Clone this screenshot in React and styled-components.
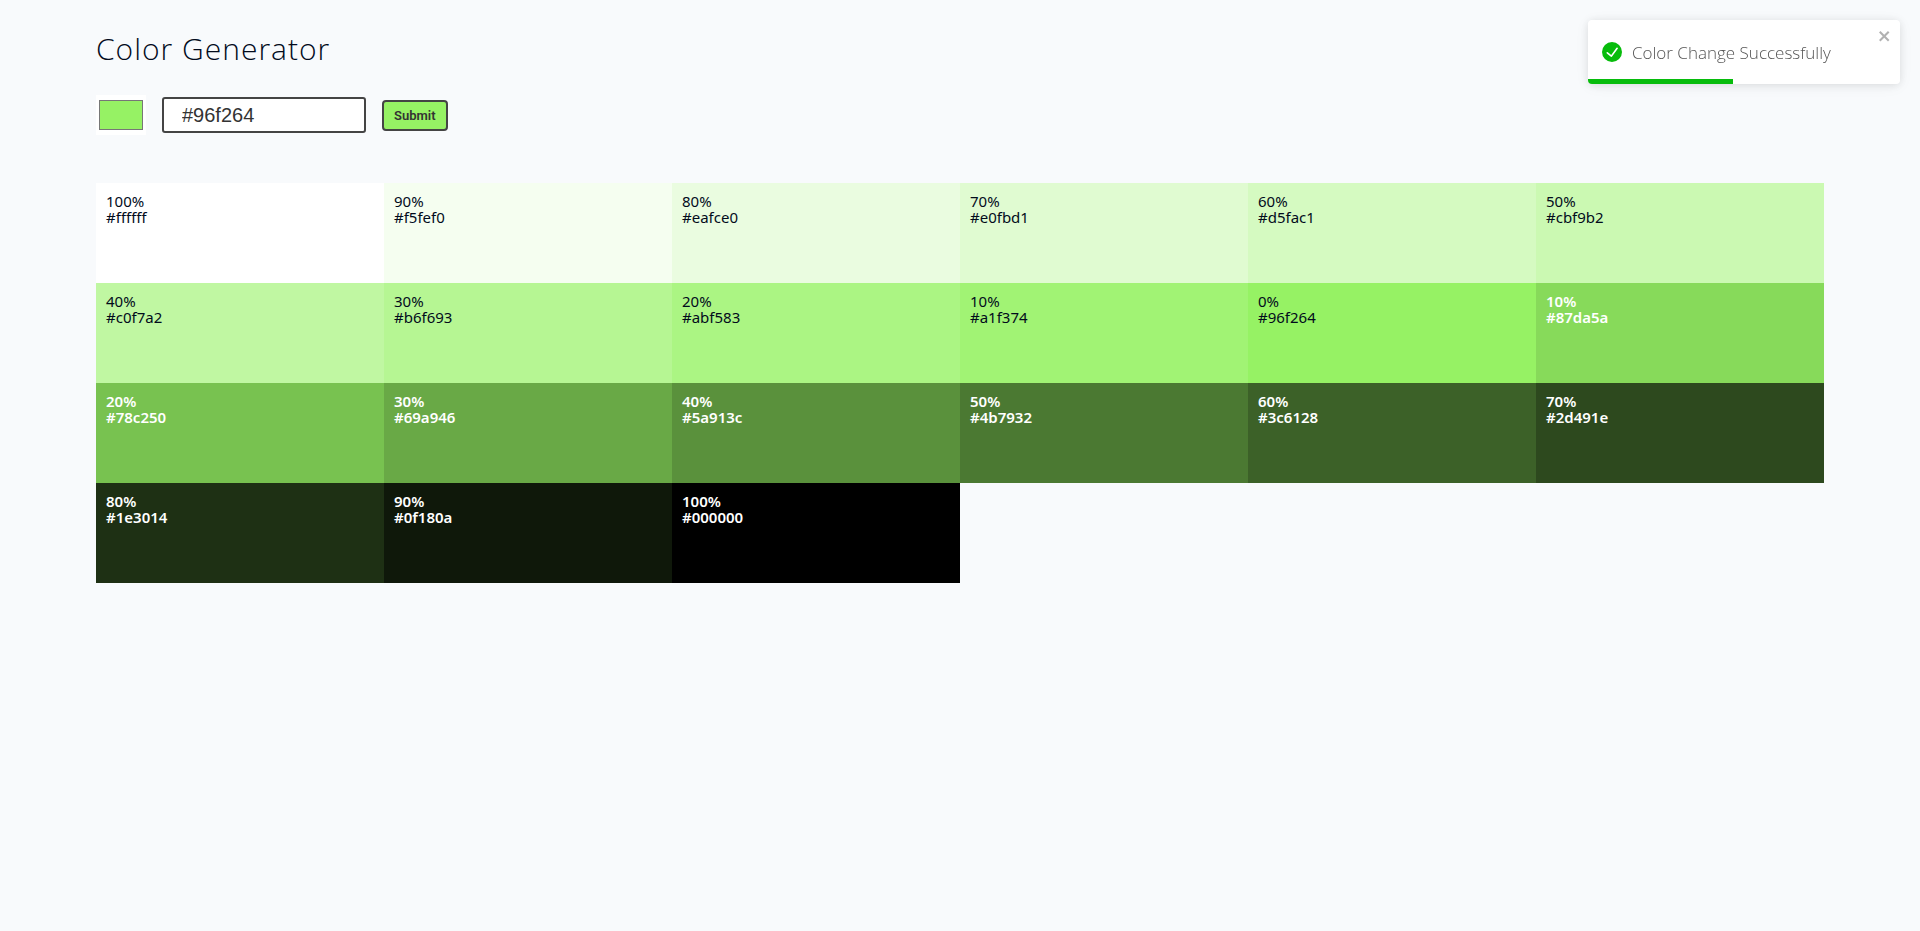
import React, { useState } from 'react';
import styled, { createGlobalStyle } from 'styled-components';

const GlobalStyle = createGlobalStyle`
  *, *::before, *::after { box-sizing: border-box; }
  body {
    margin: 0;
    background: #f8fafc;
    color: #020b1c;
    font-family: "Noto Sans", "Open Sans", sans-serif;
  }
`;

const Page = styled.main`
  width: 90vw;
  margin: 0 auto;
  padding: 25px 0 48px;
`;

const Title = styled.h1`
  margin: 0;
  font-family: "Open Sans", sans-serif;
  font-size: 30px;
  font-weight: 300;
  line-height: 48px;
  letter-spacing: 1px;
`;

const ColorForm = styled.form`
  display: flex;
  align-items: center;
  gap: 16px;
  margin: 22px 0 48px;
`;

const ColorPicker = styled.input`
  width: 50px;
  height: 40px;
  padding: 1px;
  border: 0;
  background: #fff;
`;

const HexInput = styled.input`
  width: 204px;
  height: 36px;
  padding: 0 18px;
  border: 2px solid #444;
  border-radius: 3px;
  background: #fff;
  color: #333;
  font-family: "Liberation Sans", Arial, sans-serif;
  font-size: 20px;
`;

const SubmitButton = styled.button`
  height: 31px;
  padding: 0 10px;
  border: 2px solid #444;
  border-radius: 4px;
  background: ${({ $color }) => $color};
  color: #333;
  font-family: Roboto, sans-serif;
  font-size: 13px;
  font-weight: 600;
`;

const Palette = styled.section`
  display: grid;
  grid-template-columns: repeat(6, 1fr);
`;

const Swatch = styled.article`
  min-height: 100px;
  padding: 10px;
  background: ${({ $color }) => $color};
  color: ${({ $dark }) => ($dark ? '#fff' : 'inherit')};
  font-size: 15px;
  font-weight: ${({ $dark }) => ($dark ? 600 : 400)};
  line-height: 16px;
`;

const SwatchLine = styled.p`
  margin: 0;
`;

const Toast = styled.div`
  position: fixed;
  top: 20px;
  right: 20px;
  display: flex;
  align-items: center;
  gap: 10px;
  width: 312px;
  height: 64px;
  padding: 0 14px;
  border-radius: 4px;
  overflow: hidden;
  background: #fff;
  color: #555;
  font-family: "Open Sans", sans-serif;
  font-size: 17px;
  font-weight: 300;
  box-shadow: 0 1px 10px rgba(0, 0, 0, 0.1), 0 2px 15px rgba(0, 0, 0, 0.05);
`;

const CloseButton = styled.button`
  position: absolute;
  top: 8px;
  right: 8px;
  display: flex;
  padding: 0;
  border: 0;
  background: transparent;
  color: #000;
  opacity: 0.3;
`;

const Progress = styled.div`
  position: absolute;
  left: 0;
  bottom: 0;
  height: 5px;
  background: #07bc0c;
`;

const SWATCHES = [
  [100, '#ffffff'], [90, '#f5fef0'], [80, '#eafce0'], [70, '#e0fbd1'], [60, '#d5fac1'], [50, '#cbf9b2'],
  [40, '#c0f7a2'], [30, '#b6f693'], [20, '#abf583'], [10, '#a1f374'], [0, '#96f264'], [10, '#87da5a'],
  [20, '#78c250'], [30, '#69a946'], [40, '#5a913c'], [50, '#4b7932'], [60, '#3c6128'], [70, '#2d491e'],
  [80, '#1e3014'], [90, '#0f180a'], [100, '#000000'],
];
const BASE_INDEX = 10;

export default function App() {
  const [color, setColor] = useState('#96f264');
  const [toastOpen, setToastOpen] = useState(true);
  const remaining = 46.5;

  const onChange = (event) => setColor(event.target.value);
  const onSubmit = (event) => {
    event.preventDefault();
    setToastOpen(true);
  };

  return (
    <>
      <GlobalStyle />
      <Page>
        <Title>Color Generator</Title>
        <ColorForm onSubmit={onSubmit}>
          <ColorPicker type="color" aria-label="Pick a color" value={color} onChange={onChange} />
          <HexInput type="text" aria-label="Hex color" value={color} onChange={onChange} />
          <SubmitButton type="submit" $color={color}>Submit</SubmitButton>
        </ColorForm>
        <Palette>
          {SWATCHES.map(([percent, hex], index) => (
            <Swatch key={hex} $color={hex} $dark={index > BASE_INDEX}>
              <SwatchLine>{percent}%</SwatchLine>
              <SwatchLine>{hex}</SwatchLine>
            </Swatch>
          ))}
        </Palette>
      </Page>
      {toastOpen && (
        <Toast role="alert">
          <svg width="20" height="20" viewBox="0 0 24 24" fill="#07bc0c" aria-hidden="true">
            <path d="M12 0a12 12 0 1012 12A12.014 12.014 0 0012 0zm6.927 8.2l-6.845 9.289a1.011 1.011 0 01-1.43.188l-4.888-3.908a1 1 0 111.25-1.562l4.076 3.261 6.227-8.451a1 1 0 111.61 1.183z" />
          </svg>
          <span>Color Change Successfully</span>
          <CloseButton type="button" aria-label="Close" onClick={() => setToastOpen(false)}>
            <svg width="14" height="16" viewBox="0 0 14 16" fill="currentColor" aria-hidden="true">
              <path fillRule="evenodd" d="M7.71 8.23l3.75 3.75-1.48 1.48-3.75-3.75-3.75 3.75L1 11.98l3.75-3.75L1 4.48 2.48 3l3.75 3.75L9.98 3l1.48 1.48-3.75 3.75z" />
            </svg>
          </CloseButton>
          <Progress style={{ width: `${remaining}%` }} />
        </Toast>
      )}
    </>
  );
}
